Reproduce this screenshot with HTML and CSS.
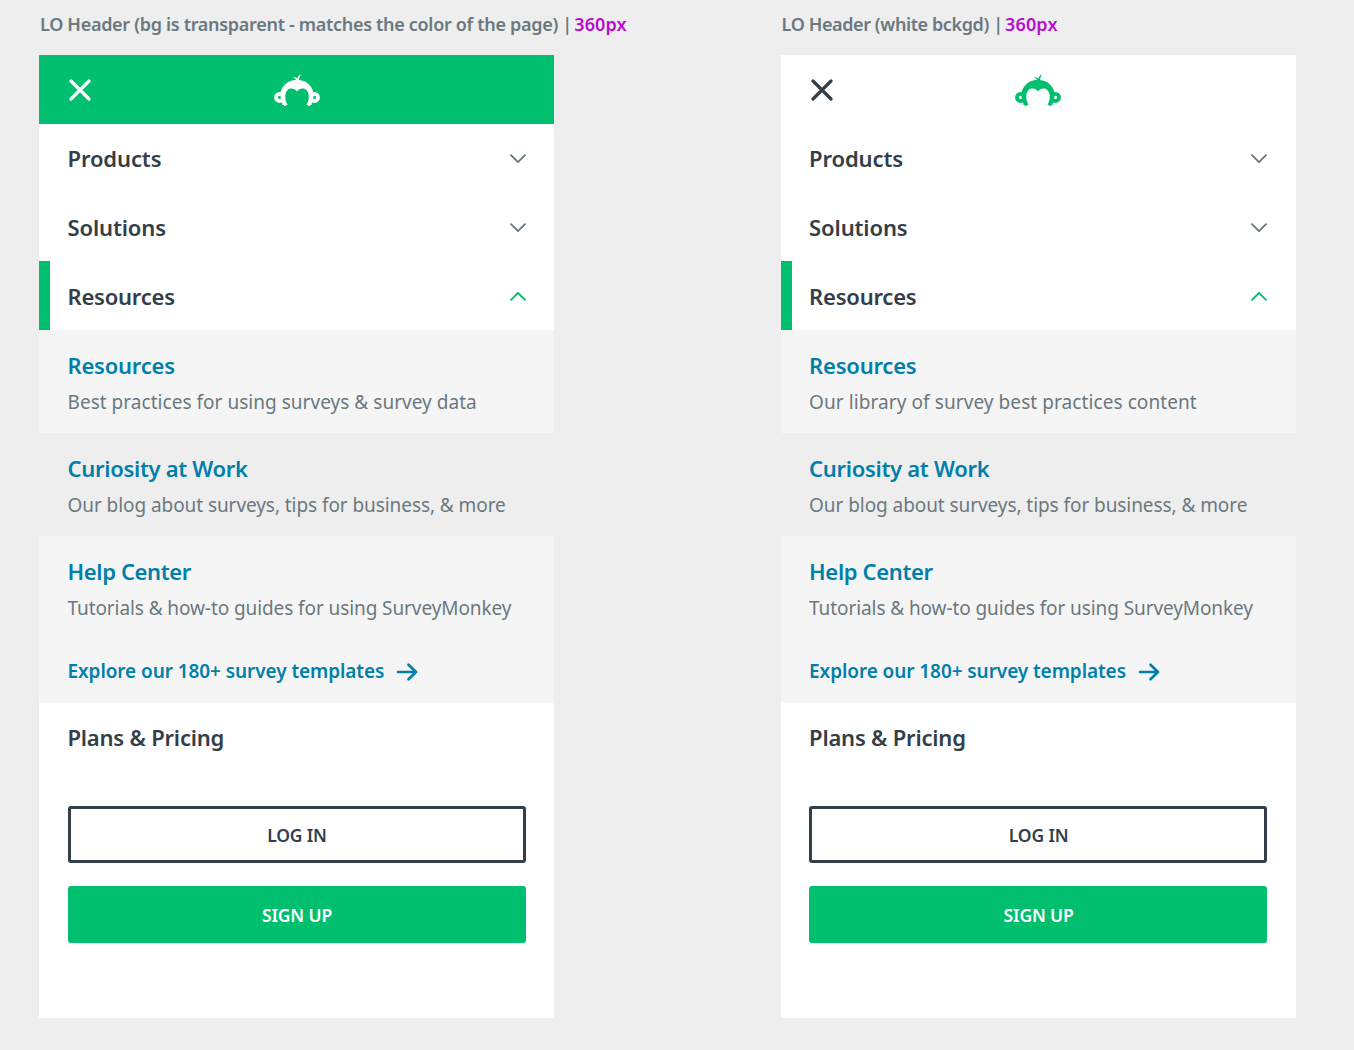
FILE: index.html
```html
<!DOCTYPE html>
<html lang="en">
<head>
<meta charset="utf-8">
<title>LO Header</title>
<link rel="stylesheet" href="styles.css">
</head>
<body>
<svg class="defs" aria-hidden="true">
  <symbol id="close" viewBox="0 0 22 22"><path d="M2 2l18 18M20 2L2 20" fill="none" stroke="currentColor" stroke-width="3.2" stroke-linecap="round"/></symbol>
  <symbol id="monkey" viewBox="0 0 46 33">
    <g fill="none" stroke="currentColor" stroke-width="3.800"><circle cx="5.600" cy="23.400" r="3.600"/><circle cx="40.400" cy="23.400" r="3.600"/></g>
    <path fill="currentColor" d="M6.200 20C7.500 11.800 14 6.200 22 5.800C21.500 4.600 20.300 3.700 18.800 3.500C20.700 2.700 22.400 3.300 23.300 4.700C23.800 2.400 25.200 .8 27.300 .2C26 1.900 25.200 3.800 25 5.900C32.500 6.400 38.600 12 39.800 20L38.700 27.500L37.600 29.300L37.900 30.700L36.300 31L35.600 32.200L32.500 30.600C34.200 28 35 25 34.700 21.500C34.300 17.300 31.800 14.600 28.600 14.600C26.300 14.600 24.200 15.600 23 17.500C21.800 15.600 19.700 14.600 17.400 14.600C14.200 14.600 11.700 17.300 11.300 21.500C11 25 11.800 28 13.500 30.600L10.400 32.200L9.700 31L8.100 30.700L8.400 29.300L7.300 27.500Z"/>
  </symbol>
  <symbol id="chevron" viewBox="0 0 16 10"><path d="M1 1.200l7 7 7-7" fill="none" stroke="currentColor" stroke-width="1.900" stroke-linecap="round" stroke-linejoin="round"/></symbol>
  <symbol id="arrow" viewBox="0 0 22 18"><path d="M2 9H20M12.500 1.800L20 9l-7.500 7.200" fill="none" stroke="currentColor" stroke-width="2.700" stroke-linecap="round" stroke-linejoin="round"/></symbol>
</svg>
<main class="board">
  <section class="variant">
    <h1 class="label"><span class="label-a">LO Header (bg is transparent - matches the color of the page) |</span> <span class="size">360px</span></h1>
    <div class="phone">
      <header class="top top-green"><svg class="close"><use href="#close"/></svg><svg class="logo"><use href="#monkey"/></svg></header>
      <nav>
        <div class="row"><span class="t-products">Products</span><svg class="chevron"><use href="#chevron"/></svg></div>
        <div class="row"><span class="t-solutions">Solutions</span><svg class="chevron"><use href="#chevron"/></svg></div>
        <div class="row open"><span class="t-resources">Resources</span><svg class="chevron"><use href="#chevron"/></svg></div>
        <div class="sub"><h2 class="t-resources">Resources</h2><p><span class="d-best">Best practices for using surveys &amp; survey data</span></p></div>
        <div class="sub plain"><h2>Curiosity at Work</h2><p><span class="d-blog">Our blog about surveys, tips for business, &amp; more</span></p></div>
        <div class="sub help"><h2 class="t-help">Help Center</h2><p><span class="d-help">Tutorials &amp; how-to guides for using SurveyMonkey</span></p>
          <a class="explore"><span>Explore our 180+ survey templates</span><svg class="arrow"><use href="#arrow"/></svg></a></div>
        <div class="row plans"><span>Plans &amp; Pricing</span></div>
      </nav>
      <div class="actions"><button class="btn login">LOG IN</button><button class="btn signup">SIGN UP</button></div>
    </div>
  </section>
  <section class="variant">
    <h1 class="label"><span class="label-b">LO Header (white bckgd) |</span> <span class="size">360px</span></h1>
    <div class="phone">
      <header class="top top-white"><svg class="close"><use href="#close"/></svg><svg class="logo"><use href="#monkey"/></svg></header>
      <nav>
        <div class="row"><span class="t-products">Products</span><svg class="chevron"><use href="#chevron"/></svg></div>
        <div class="row"><span class="t-solutions">Solutions</span><svg class="chevron"><use href="#chevron"/></svg></div>
        <div class="row open"><span class="t-resources">Resources</span><svg class="chevron"><use href="#chevron"/></svg></div>
        <div class="sub"><h2 class="t-resources">Resources</h2><p><span class="d-library">Our library of survey best practices content</span></p></div>
        <div class="sub plain"><h2>Curiosity at Work</h2><p><span class="d-blog">Our blog about surveys, tips for business, &amp; more</span></p></div>
        <div class="sub help"><h2 class="t-help">Help Center</h2><p><span class="d-help">Tutorials &amp; how-to guides for using SurveyMonkey</span></p>
          <a class="explore"><span>Explore our 180+ survey templates</span><svg class="arrow"><use href="#arrow"/></svg></a></div>
        <div class="row plans"><span>Plans &amp; Pricing</span></div>
      </nav>
      <div class="actions"><button class="btn login">LOG IN</button><button class="btn signup">SIGN UP</button></div>
    </div>
  </section>
</main>
</body>
</html>
```
FILE: styles.css
```css
* { box-sizing: border-box; }
body { margin: 0; height: 1050px; overflow: hidden; background: #eee; color: #333e48; font-family: "Noto Sans", sans-serif; }
h1, h2, p { margin: 0; }
svg { display: block; flex: none; }
.defs { width: 0; height: 0; position: absolute; }
.board { display: grid; grid-template-columns: 515px 515px; column-gap: 226.600px; padding-left: 39px; }
.variant { min-width: 0; }
.label { height: 55px; padding: 12px 0 0 1px; white-space: nowrap; font-size: 18px; line-height: 25px; font-weight: 600; color: #6b787f; letter-spacing: -.29px; word-spacing: -.1px; }
.label-b { letter-spacing: -.38px; }
.label .size { color: #b90bd4; letter-spacing: .15px; margin-left: -2px; }
.phone { height: 963px; background: #fff; }
.top { height: 69px; display: grid; grid-template-columns: 1fr 46px 1fr; align-items: center; padding: 0 30px; }
.top-green { background: #00bf6f; color: #fff; }
.top-white .logo { color: #00bf6f; }
.close { width: 22px; height: 22px; }
.logo { width: 46px; height: 33px; margin-top: 2px; }
.row { height: 68.700px; display: flex; align-items: center; justify-content: space-between; padding: 0 28.500px; font-size: 22px; font-weight: 600; line-height: 30px; letter-spacing: -.12px; }
.chevron { width: 16px; height: 10px; margin-top: 1px; color: #6b787f; }
.row.open { border-left: 11px solid #00bf6f; padding-left: 17.500px; }
.open .chevron { transform: rotate(180deg); color: #00bf6f; }
.sub { height: 103px; padding: 20px 28.500px 0; background: #f5f5f5; }
.plain { background: #eee; }
.help { height: 167px; }
.sub h2 { font-size: 22px; line-height: 30px; font-weight: 600; color: #007faa; letter-spacing: -.3px; }
.row .t-resources, .sub .t-resources { letter-spacing: -.22px; }
.sub .t-help { letter-spacing: -.36px; }
.sub p { margin-top: 9px; font-size: 19px; line-height: 26px; color: #6b787f; white-space: nowrap; }
.d-best { letter-spacing: .03px; }
.d-library { letter-spacing: .08px; }
.d-blog { letter-spacing: -.07px; }
.d-help { letter-spacing: -.09px; }
.explore { display: flex; align-items: center; gap: 12px; margin-top: 37px; font-size: 19px; line-height: 26px; font-weight: 600; letter-spacing: -.08px; color: #007faa; white-space: nowrap; }
.arrow { width: 22px; height: 18px; margin-top: 2px; }
.plans { height: 69px; padding-top: 0; padding-bottom: 1px; letter-spacing: -.2px; }
.actions { display: grid; gap: 23px; padding: 34px 28.500px 0; }
.btn { height: 57px; border: 0; border-radius: 3px; padding: 0 0 0 1px; font: 600 17.500px/24px "Noto Sans", sans-serif; letter-spacing: -.15px; }
.login { border: 3px solid #333e48; background: #fff; color: #333e48; }
.signup { background: #00bf6f; color: #fff; }
```
